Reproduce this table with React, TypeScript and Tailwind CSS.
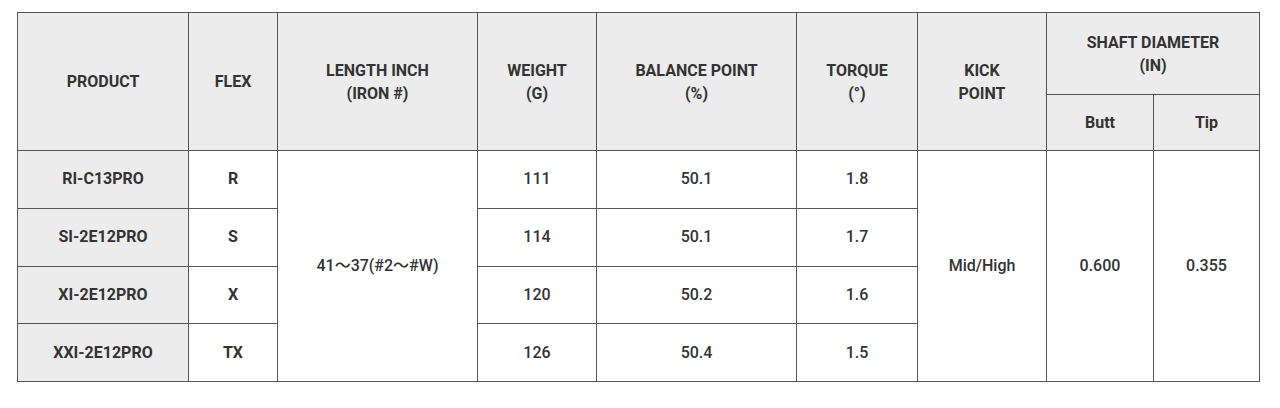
import React from 'react';

type Row = {
  product: string;
  flex: string;
  weight: string;
  balance: string;
  torque: string;
};

const rows: Row[] = [
  { product: 'RI-C13PRO', flex: 'R', weight: '111', balance: '50.1', torque: '1.8' },
  { product: 'SI-2E12PRO', flex: 'S', weight: '114', balance: '50.1', torque: '1.7' },
  { product: 'XI-2E12PRO', flex: 'X', weight: '120', balance: '50.2', torque: '1.6' },
  { product: 'XXI-2E12PRO', flex: 'TX', weight: '126', balance: '50.4', torque: '1.5' },
];

const th = 'border border-[#555] bg-[#ececec] font-bold text-center align-middle leading-[23px]';
const td = 'border border-[#555] text-center align-middle font-medium';

const App: React.FC = () => {
  return (
    <div className="bg-white pl-[17px] pt-[12px] font-['Roboto','Noto_Sans_CJK_KR',sans-serif] text-[16px] text-[#333]">
      <table className="table-fixed border-collapse w-[1242px]">
        <colgroup>
          <col className="w-[171px]" />
          <col className="w-[89px]" />
          <col className="w-[200px]" />
          <col className="w-[119px]" />
          <col className="w-[200px]" />
          <col className="w-[121px]" />
          <col className="w-[129px]" />
          <col className="w-[107px]" />
          <col className="w-[106px]" />
        </colgroup>
        <thead>
          <tr className="h-[82px]">
            <th rowSpan={2} className={th}>PRODUCT</th>
            <th rowSpan={2} className={th}>FLEX</th>
            <th rowSpan={2} className={th}>LENGTH INCH<br />(IRON #)</th>
            <th rowSpan={2} className={th}>WEIGHT<br />(G)</th>
            <th rowSpan={2} className={th}>BALANCE POINT<br />(%)</th>
            <th rowSpan={2} className={th}>TORQUE<br />(°)</th>
            <th rowSpan={2} className={th}>KICK<br />POINT</th>
            <th colSpan={2} className={th}>SHAFT DIAMETER<br />(IN)</th>
          </tr>
          <tr className="h-[56px]">
            <th className={th}>Butt</th>
            <th className={th}>Tip</th>
          </tr>
        </thead>
        <tbody>
          {rows.map((r, i) => (
            <tr key={r.product} className="h-[57.75px]">
              <td className={`${td} bg-[#ececec] !font-bold`}>{r.product}</td>
              <td className={`${td} !font-bold`}>{r.flex}</td>
              {i === 0 && (
                <td rowSpan={4} className={td}>41～37(#2～#W)</td>
              )}
              <td className={td}>{r.weight}</td>
              <td className={td}>{r.balance}</td>
              <td className={td}>{r.torque}</td>
              {i === 0 && (
                <>
                  <td rowSpan={4} className={td}>Mid/High</td>
                  <td rowSpan={4} className={td}>0.600</td>
                  <td rowSpan={4} className={td}>0.355</td>
                </>
              )}
            </tr>
          ))}
        </tbody>
      </table>
    </div>
  );
};

export default App;
